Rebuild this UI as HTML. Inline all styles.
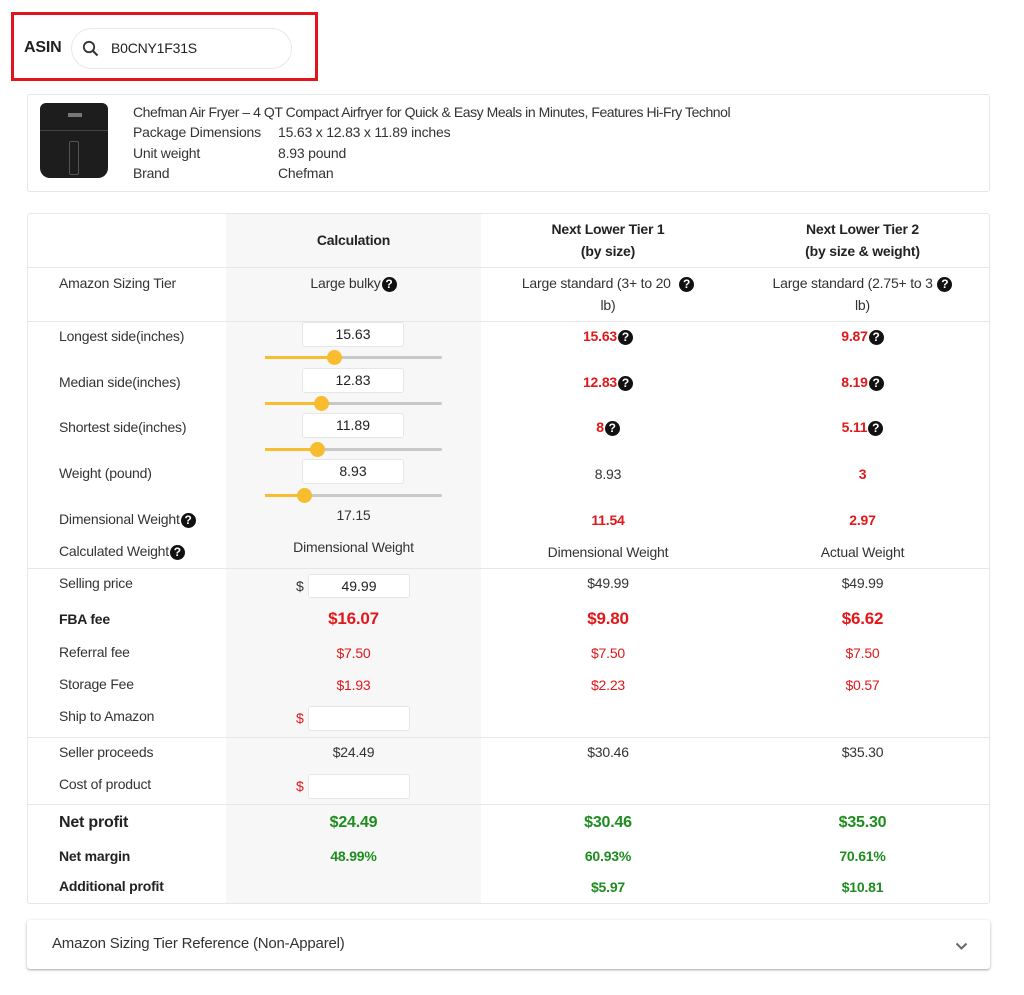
<!DOCTYPE html>
<html><head><meta charset="utf-8"><style>
body{margin:0;width:1024px;height:995px;background:#fff;font-family:"Liberation Sans",Arial,sans-serif;position:relative;overflow:hidden;color:#333}
.t{position:absolute;line-height:18px;font-size:14px;white-space:nowrap;letter-spacing:-0.2px}
.L{left:59px}
.c1{left:226px;width:255px;text-align:center}
.c2{left:481px;width:254px;text-align:center}
.c3{left:735px;width:255px;text-align:center}
.r{color:#e0181b}.rb{color:#e0181b;font-weight:bold}
.g{color:#1e8c1e;font-weight:bold}
.b{font-weight:bold;color:#222}
.q{display:inline-block;width:15px;height:15px;border-radius:50%;background:#111;color:#fff;font-size:12px;font-weight:bold;line-height:15px;text-align:center;vertical-align:0px;margin-left:1px;letter-spacing:0}
.box{position:absolute;background:#fff;border:1px solid #e6e6e6;border-radius:3px;box-sizing:border-box;text-align:center;font-size:14px;line-height:23px;color:#222}
.hl{position:absolute;left:28px;width:962px;height:1px;background:#e6e6e6}
.tr{position:absolute;left:265px;width:177px;height:3px;background:#c8c8c8;border-radius:2px}
.tf{position:absolute;left:0;top:0;height:3px;background:#f7bd2e}
.th{position:absolute;width:15px;height:15px;border-radius:50%;background:#f7bd2e;top:-6px}
</style></head><body>
<div style="position:absolute;left:11px;top:12px;width:301px;height:63px;border:3px solid #e3141b"></div>
<div class="t" style="left:24px;top:39px;font-size:16px;font-weight:bold;color:#222">ASIN</div>
<div style="position:absolute;left:71px;top:28px;width:221px;height:41px;border:1px solid #e8e8e8;border-radius:21px;box-sizing:border-box"></div>
<svg style="position:absolute;left:82px;top:40px" width="17" height="17" viewBox="0 0 17 17"><circle cx="7" cy="7" r="5.2" fill="none" stroke="#333" stroke-width="1.8"/><path d="M11 11 L15.5 15.5" stroke="#333" stroke-width="2"/></svg>
<div class="t" style="left:111px;top:39px;color:#222">B0CNY1F31S</div>

<div style="position:absolute;left:27px;top:94px;width:963px;height:98px;border:1px solid #e6e6e6;border-radius:3px;box-sizing:border-box"></div>
<div style="position:absolute;left:40px;top:103px;width:68px;height:75px;background:#1d1d1d;border-radius:6px 6px 10px 10px"></div>
<div style="position:absolute;left:40px;top:130px;width:68px;height:1px;background:#444"></div>
<div style="position:absolute;left:69px;top:141px;width:8px;height:32px;border:1px solid #555;border-radius:2px"></div>
<div style="position:absolute;left:68px;top:113px;width:14px;height:4px;background:#777"></div>
<div class="t" style="left:133px;top:103px;color:#333;letter-spacing:-0.45px">Chefman Air Fryer – 4 QT Compact Airfryer for Quick &amp; Easy Meals in Minutes, Features Hi-Fry Technol</div>
<div class="t" style="left:133px;top:123px">Package Dimensions</div><div class="t" style="left:278px;top:123px">15.63 x 12.83 x 11.89 inches</div>
<div class="t" style="left:133px;top:144px">Unit weight</div><div class="t" style="left:278px;top:144px">8.93 pound</div>
<div class="t" style="left:133px;top:164px">Brand</div><div class="t" style="left:278px;top:164px">Chefman</div>

<div style="position:absolute;left:27px;top:213px;width:963px;height:691px;border:1px solid #e6e6e6;border-radius:3px;box-sizing:border-box"></div>
<div style="position:absolute;left:226px;top:214px;width:255px;height:689px;background:#f7f7f7"></div>
<div class="hl" style="top:267px"></div><div class="hl" style="top:321px"></div><div class="hl" style="top:568px"></div><div class="hl" style="top:737px"></div><div class="hl" style="top:804px"></div>

<div class="t c1 b" style="top:231px">Calculation</div>
<div class="t c2 b" style="top:220px">Next Lower Tier 1</div><div class="t c2 b" style="top:242px">(by size)</div>
<div class="t c3 b" style="top:220px">Next Lower Tier 2</div><div class="t c3 b" style="top:242px">(by size &amp; weight)</div>

<div class="t L" style="top:274px">Amazon Sizing Tier</div>
<div class="t c1" style="top:274px">Large bulky<span class="q">?</span></div>
<div class="t c2" style="top:274px">Large standard (3+ to 20 &nbsp;<span class="q">?</span></div><div class="t c2" style="top:296px">lb)</div>
<div class="t c3" style="top:274px">Large standard (2.75+ to 3 <span class="q">?</span></div><div class="t c3" style="top:296px">lb)</div>

<div class="t L" style="top:327px">Longest side(inches)</div>
<div class="box" style="left:302px;top:322px;width:102px;height:25px">15.63</div>
<div class="tr" style="top:356px"><div class="tf" style="width:69px"></div><div class="th" style="left:62px"></div></div>
<div class="t c2 rb" style="top:327px">15.63<span class="q">?</span></div><div class="t c3 rb" style="top:327px">9.87<span class="q">?</span></div>

<div class="t L" style="top:373px">Median side(inches)</div>
<div class="box" style="left:302px;top:368px;width:102px;height:25px">12.83</div>
<div class="tr" style="top:402px"><div class="tf" style="width:56px"></div><div class="th" style="left:49px"></div></div>
<div class="t c2 rb" style="top:373px">12.83<span class="q">?</span></div><div class="t c3 rb" style="top:373px">8.19<span class="q">?</span></div>

<div class="t L" style="top:418px">Shortest side(inches)</div>
<div class="box" style="left:302px;top:413px;width:102px;height:25px">11.89</div>
<div class="tr" style="top:448px"><div class="tf" style="width:52px"></div><div class="th" style="left:45px"></div></div>
<div class="t c2 rb" style="top:418px">8<span class="q">?</span></div><div class="t c3 rb" style="top:418px">5.11<span class="q">?</span></div>

<div class="t L" style="top:464px">Weight (pound)</div>
<div class="box" style="left:302px;top:459px;width:102px;height:25px">8.93</div>
<div class="tr" style="top:494px"><div class="tf" style="width:39px"></div><div class="th" style="left:32px"></div></div>
<div class="t c2" style="top:465px">8.93</div><div class="t c3 rb" style="top:465px">3</div>

<div class="t L" style="top:510px">Dimensional Weight<span class="q">?</span></div>
<div class="t c1" style="top:506px">17.15</div>
<div class="t c2 rb" style="top:511px">11.54</div><div class="t c3 rb" style="top:511px">2.97</div>

<div class="t L" style="top:542px">Calculated Weight<span class="q">?</span></div>
<div class="t c1" style="top:538px">Dimensional Weight</div>
<div class="t c2" style="top:543px">Dimensional Weight</div><div class="t c3" style="top:543px">Actual Weight</div>

<div class="t L" style="top:574px">Selling price</div>
<div class="t" style="left:296px;top:577px">$</div>
<div class="box" style="left:308px;top:574px;width:102px;height:24px">49.99</div>
<div class="t c2" style="top:574px">$49.99</div><div class="t c3" style="top:574px">$49.99</div>

<div class="t L b" style="top:610px">FBA fee</div>
<div class="t c1 rb" style="top:610px;font-size:17px">$16.07</div>
<div class="t c2 rb" style="top:610px;font-size:17px">$9.80</div><div class="t c3 rb" style="top:610px;font-size:17px">$6.62</div>

<div class="t L" style="top:643px">Referral fee</div>
<div class="t c1 r" style="top:644px">$7.50</div><div class="t c2 r" style="top:644px">$7.50</div><div class="t c3 r" style="top:644px">$7.50</div>
<div class="t L" style="top:675px">Storage Fee</div>
<div class="t c1 r" style="top:676px">$1.93</div><div class="t c2 r" style="top:676px">$2.23</div><div class="t c3 r" style="top:676px">$0.57</div>

<div class="t L" style="top:707px">Ship to Amazon</div>
<div class="t r" style="left:296px;top:709px">$</div>
<div class="box" style="left:308px;top:706px;width:102px;height:25px"></div>

<div class="t L" style="top:743px">Seller proceeds</div>
<div class="t c1" style="top:743px">$24.49</div><div class="t c2" style="top:743px">$30.46</div><div class="t c3" style="top:743px">$35.30</div>
<div class="t L" style="top:775px">Cost of product</div>
<div class="t r" style="left:296px;top:777px">$</div>
<div class="box" style="left:308px;top:774px;width:102px;height:25px"></div>

<div class="t L b" style="top:814px;font-size:16px">Net profit</div>
<div class="t c1 g" style="top:814px;font-size:16px">$24.49</div><div class="t c2 g" style="top:814px;font-size:16px">$30.46</div><div class="t c3 g" style="top:814px;font-size:16px">$35.30</div>
<div class="t L b" style="top:847px;font-size:14px">Net margin</div>
<div class="t c1 g" style="top:847px;font-size:14px">48.99%</div><div class="t c2 g" style="top:847px;font-size:14px">60.93%</div><div class="t c3 g" style="top:847px;font-size:14px">70.61%</div>
<div class="t L b" style="top:877px;font-size:14px">Additional profit</div>
<div class="t c2 g" style="top:878px;font-size:14px">$5.97</div><div class="t c3 g" style="top:878px;font-size:14px">$10.81</div>

<div style="position:absolute;left:27px;top:920px;width:963px;height:49px;background:#fff;border-radius:3px;box-shadow:0 1px 3px rgba(0,0,0,.25),0 1px 1px rgba(0,0,0,.12)"></div>
<div class="t" style="left:52px;top:935px;font-size:15px;color:#333">Amazon Sizing Tier Reference (Non-Apparel)</div>
<svg style="position:absolute;left:955px;top:942px" width="13" height="9" viewBox="0 0 13 9"><path d="M1.5 1.5 L6.5 6.5 L11.5 1.5" fill="none" stroke="#666" stroke-width="2"/></svg>
</body></html>
